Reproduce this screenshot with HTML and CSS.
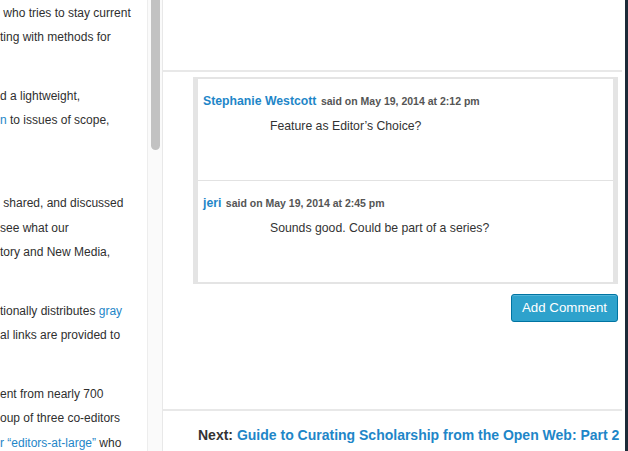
FILE: index.html
```html
<!DOCTYPE html>
<html>
<head>
<meta charset="utf-8">
<link rel="stylesheet" href="styles.css">
</head>
<body>
<div class="page">
  <div class="article">
    <p class="para"><span class="ln">&nbsp;who tries to stay current</span><span class="ln">ting with methods for</span></p>
    <p class="para"><span class="ln">d a lightweight,</span><span class="ln"><a class="link">n</a> to issues of scope,</span><span class="ln">&nbsp;</span></p>
    <p class="para"><span class="ln">&nbsp;shared, and discussed</span><span class="ln">see what our</span><span class="ln">tory and New Media,</span></p>
    <p class="para"><span class="ln">tionally distributes <a class="link">gray</a></span><span class="ln">al links are provided to</span></p>
    <p class="para"><span class="ln">ent from nearly 700</span><span class="ln">oup of three co-editors</span><span class="ln"><a class="link">r “editors-at-large”</a> who</span></p>
  </div>
  <div class="scrollbar"><div class="thumb"></div></div>
  <div class="main">
    <div class="top-space"></div>
    <div class="comments">
      <div class="comment">
        <div class="meta"><a class="author">Stephanie Westcott</a> <span class="said">said on May 19, 2014 at 2:12 pm</span></div>
        <div class="text">Feature as Editor’s Choice?</div>
      </div>
      <div class="comment">
        <div class="meta"><a class="author">jeri</a> <span class="said">said on May 19, 2014 at 2:45 pm</span></div>
        <div class="text">Sounds good. Could be part of a series?</div>
      </div>
    </div>
    <div class="actions"><button class="btn">Add Comment</button></div>
    <div class="next"><span class="next-label">Next:</span> <a class="next-link">Guide to Curating Scholarship from the Open Web: Part 2</a></div>
  </div>
  <div class="edge"></div>
</div>
</body>
</html>
```
FILE: styles.css
```css
html, body {
  margin: 0;
  padding: 0;
  background: #fff;
}
body {
  font-family: "Liberation Sans", Arial, sans-serif;
  color: #333;
}
.page {
  display: flex;
  width: 628px;
  height: 451px;
  overflow: hidden;
}
.article {
  width: 147px;
  flex: none;
  overflow: hidden;
  padding-top: 0.5px;
  font-size: 12px;
  line-height: 24.5px;
  color: #2f2f2f;
  white-space: nowrap;
}
.para {
  margin: 0 0 34px 0;
}
.ln {
  display: block;
}
.link {
  color: #1e86c8;
}
.scrollbar {
  width: 14px;
  flex: none;
  background: #fafafa;
  border-left: 1px solid #ededed;
  border-right: 1px solid #e8e8e8;
  display: flex;
  justify-content: center;
}
.thumb {
  width: 9px;
  height: 150px;
  background: #c2c2c2;
  border-radius: 0 0 4.5px 4.5px;
}
.main {
  width: 459px;
  flex: none;
  display: flex;
  flex-direction: column;
}
.top-space {
  height: 70px;
  border-bottom: 2px solid #e8e8e8;
}
.comments {
  margin: 5px 4px 0 30px;
  border-style: solid;
  border-color: #e4e4e4;
  border-width: 2px 5px 2px 5px;
  background: #fff;
}
.comment {
  height: 101px;
  box-sizing: border-box;
  padding: 13px 5px 0 5px;
}
.comment + .comment {
  border-top: 1px solid #e2e2e2;
  height: 102px;
}
.meta {
  line-height: 16px;
  font-weight: bold;
}
.author {
  color: #1e86c8;
  font-size: 12.25px;
}
.said {
  color: #555;
  font-size: 10.5px;
}
.text {
  margin-top: 9px;
  padding-left: 67px;
  font-size: 12.25px;
  line-height: 16px;
  color: #333;
}
.actions {
  display: flex;
  justify-content: flex-end;
  padding: 10px 4px 0 0;
}
.btn {
  width: 107px;
  height: 28px;
  box-sizing: border-box;
  background: #2ea2cc;
  border: 1px solid #0074a2;
  border-radius: 3px;
  color: #fff;
  font-family: "Liberation Sans", Arial, sans-serif;
  font-size: 13.3px;
  padding: 0 0 1px 0;
  box-shadow: inset 0 1px 0 rgba(120, 200, 230, 0.5);
}
.next {
  margin-top: 87px;
  border-top: 2px solid #e8e8e8;
  padding: 14px 0 0 35px;
  font-size: 14px;
  line-height: 20px;
  font-weight: bold;
  white-space: nowrap;
}
.next-label {
  color: #333;
}
.next-link {
  color: #1e86c8;
}
.edge {
  width: 3px;
  flex: none;
  border-left: 3px solid #fff;
  background: #1c2a38;
}
```
